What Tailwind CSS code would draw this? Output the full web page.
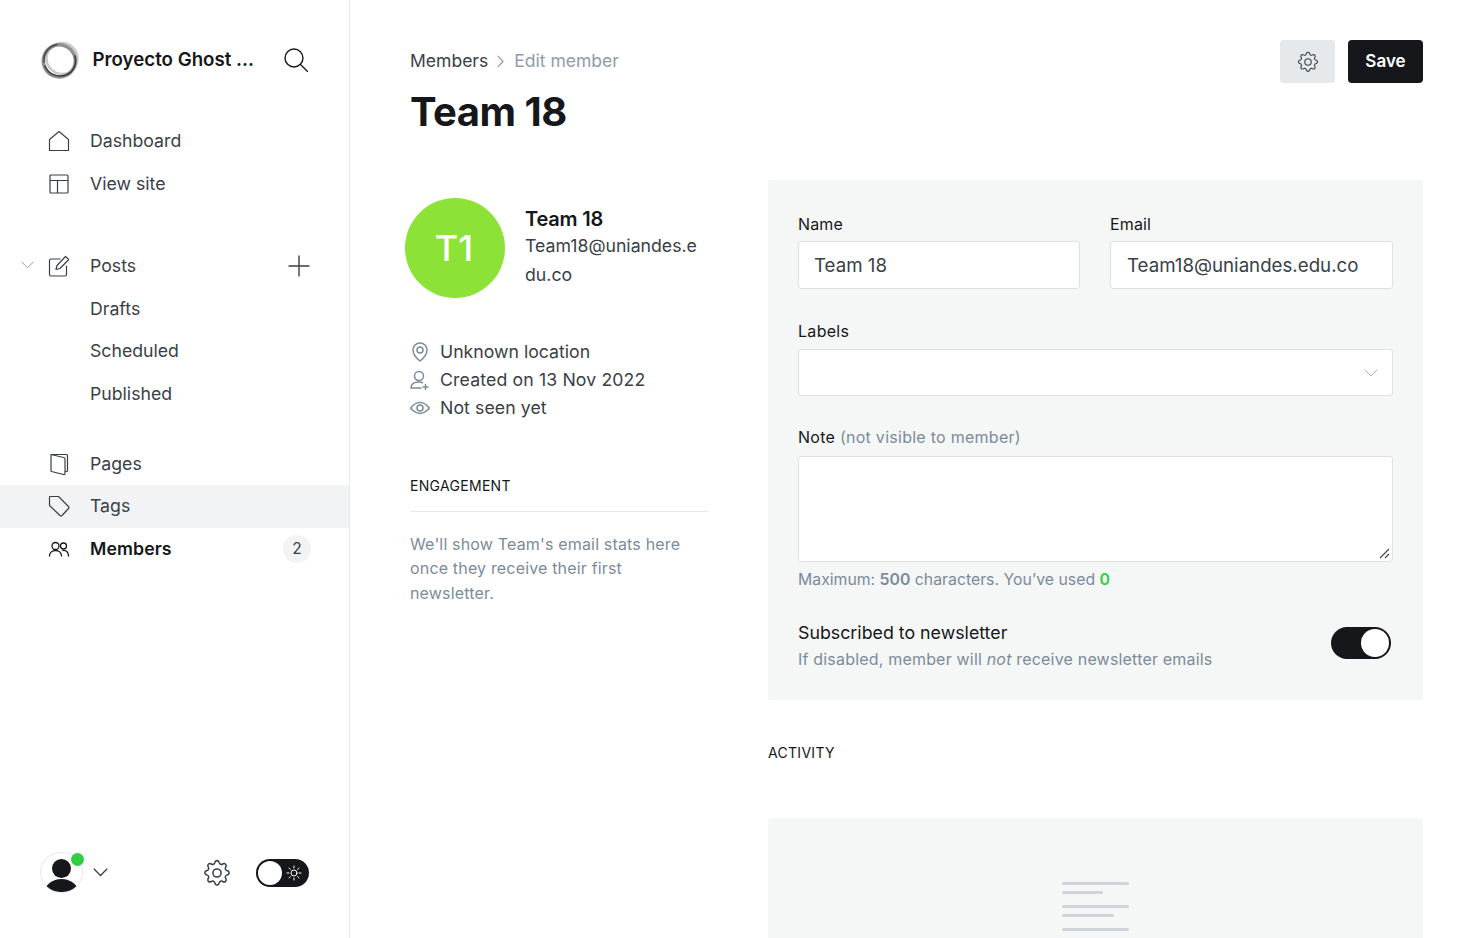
<!doctype html>
<html lang="en">
<head>
<meta charset="utf-8">
<title>Edit member</title>
<script src="https://cdn.jsdelivr.net/npm/@tailwindcss/browser@4"></script>
</head>
<body class="font-['Inter',sans-serif] text-[#15171a] bg-white">
<div class="flex h-[938px] w-[1483px] overflow-hidden">

  <!-- sidebar -->
  <aside class="flex flex-col w-[350px] h-full shrink-0 border-r border-[#e6e9eb]">
    <div class="flex items-center h-[40px] mt-[40px] pl-[40px] pr-[40px]">
      <svg class="w-[40px] h-[40px] shrink-0" viewBox="0 0 40 40" fill="none">
        <ellipse cx="22" cy="18.500" rx="15.500" ry="15.500" stroke="#c9c9c9" stroke-width="2.500"/>
        <ellipse cx="19" cy="20.500" rx="16" ry="16" stroke="#8f8f8f" stroke-width="3.500" transform="rotate(-25 20 20)"/>
        <path d="M5 26C8 34 17 38 26 35 34 32 37 24 35 16" stroke="#3c3c3c" stroke-width="1.500" stroke-linecap="round"/>
        <path d="M4 22C3 13 9 6 17 4.500" stroke="#4a4a4a" stroke-width="1.500" stroke-linecap="round"/>
      </svg>
      <span class="ml-[12.500px] text-[18.700px] font-semibold whitespace-nowrap">Proyecto Ghost ...</span>
      <svg class="w-[24px] h-[24px] ml-auto mr-[1px] shrink-0" viewBox="0 0 24 24" fill="none" stroke="#15171a" stroke-width="1.400" stroke-linecap="round"><circle cx="10" cy="10" r="9"/><path d="M16.500 16.500 23.500 23.500"/></svg>
    </div>

    <nav class="mt-[39px] text-[17.700px] text-[#394047]">
      <a class="flex items-center h-[43px] pl-[48px]">
        <svg class="w-[22px] h-[22px]" viewBox="0 0 22 22" fill="none" stroke="#394047" stroke-width="1.200" stroke-linejoin="round"><path d="M1.500 20.500V9.500L11 1.500l9.500 8v11z"/></svg>
        <span class="ml-[20px] pt-[2px]">Dashboard</span>
      </a>
      <a class="flex items-center h-[43px] pl-[48px]">
        <svg class="w-[22px] h-[22px]" viewBox="0 0 22 22" fill="none" stroke="#394047" stroke-width="1.200"><rect x="2" y="2" width="18" height="18" rx="1"/><path d="M2 7.500h18M9.500 7.500V20"/></svg>
        <span class="ml-[20px] pt-[2px]">View site</span>
      </a>

      <div class="mt-[39px] relative flex items-center h-[43px] pl-[48px]">
        <svg class="absolute left-[21px] top-[17px] w-[13px] h-[8px]" viewBox="0 0 13 8" fill="none" stroke="#8e9cac" stroke-width="1"><path d="M.5.8l6 6 6-6"/></svg>
        <svg class="w-[22px] h-[22px]" viewBox="0 0 22 22" fill="none" stroke="#394047" stroke-width="1.200" stroke-linejoin="round" stroke-linecap="round"><path d="M12 4H3a1.500 1.500 0 0 0-1.500 1.500v14A1.500 1.500 0 0 0 3 21h14a1.500 1.500 0 0 0 1.500-1.500V11"/><path d="M17.500 1.500l3.200 3L12 13.500l-4 1 1-4z"/></svg>
        <span class="ml-[20px] pt-[2px]">Posts</span>
        <svg class="ml-auto mr-[39px] w-[22px] h-[22px]" viewBox="0 0 22 22" fill="none" stroke="#394047" stroke-width="1.400" stroke-linecap="round"><path d="M11 1v20M1 11h20"/></svg>
      </div>
      <a class="flex items-center h-[42.500px] pl-[90px] pt-[2px]">Drafts</a>
      <a class="flex items-center h-[42.500px] pl-[90px] pt-[2px]">Scheduled</a>
      <a class="flex items-center h-[42.500px] pl-[90px] pt-[2px]">Published</a>

      <a class="mt-[29px] flex items-center h-[41.500px] pl-[48px]">
        <svg class="w-[22px] h-[22px]" viewBox="0 0 22 22" fill="none" stroke="#394047" stroke-width="1.200" stroke-linejoin="round"><path d="M3 1.500h15.500a1 1 0 0 1 1 1v15a1 1 0 0 1-1 1H17M3 1.500l12.500 3a1.500 1.500 0 0 1 1.500 1.500v14.500a1 1 0 0 1-1.300 1L3.500 18.500a1 1 0 0 1-.5-1z"/></svg>
        <span class="ml-[20px]">Pages</span>
      </a>
      <a class="flex items-center h-[43px] pl-[48px] pb-[1px] bg-[#f1f3f4]">
        <svg class="w-[22px] h-[22px]" viewBox="0 0 22 22" fill="none" stroke="#394047" stroke-width="1.200" stroke-linejoin="round"><path d="M2 1.500h8.500l10 10a1.500 1.500 0 0 1 0 2L14 20.500a1.500 1.500 0 0 1-2 0L1.500 10.500V2a.5.5 0 0 1 .5-.5z"/></svg>
        <span class="ml-[20px]">Tags</span>
      </a>
      <a class="flex items-center h-[42.500px] pl-[48px] pb-[1px] text-[#15171a]">
        <svg class="w-[22px] h-[22px]" viewBox="0 0 22 22" fill="none" stroke="#15171a" stroke-width="1.300" stroke-linecap="round"><circle cx="7.500" cy="8" r="3.500"/><path d="M1.500 18c0-3.500 2.700-5.500 6-5.500s6 2 6 5.500"/><circle cx="15.500" cy="8" r="3"/><path d="M15 12.500c3.500-.3 5.500 2 5.500 5.500"/></svg>
        <span class="ml-[20px] pt-[2px] font-semibold tracking-[0.100px]">Members</span>
        <span class="ml-auto mr-[38px] flex items-center justify-center w-[28px] h-[28px] rounded-full bg-[#f1f3f4] text-[15.500px] text-[#394047]">2</span>
      </a>
    </nav>

    <div class="mt-auto mb-[45px] flex items-center pl-[40px] pr-[40px]">
      <div class="relative w-[43px] h-[41px] rounded-full border border-[#e6e9eb]">
        <div class="w-full h-full rounded-full overflow-hidden flex flex-col items-center">
          <div class="mt-[6px] w-[19px] h-[19px] shrink-0 rounded-full bg-[#15171a]"></div>
          <div class="mt-[1px] w-[33px] h-[26px] shrink-0 rounded-[50%] bg-[#15171a]"></div>
        </div>
        <span class="absolute top-[0px] right-[-2px] w-[13px] h-[13px] rounded-full bg-[#30cf43]"></span>
      </div>
      <svg class="ml-[10px] w-[15px] h-[9px]" viewBox="0 0 15 9" fill="none" stroke="#394047" stroke-width="1.300"><path d="M.8.8l6.700 6.700L14.200.8"/></svg>
      <svg class="ml-auto w-[28px] h-[28px]" viewBox="0 0 24 24" fill="none" stroke="#394047" stroke-width="1.300" stroke-linejoin="round"><circle cx="12" cy="12" r="3.500"/><path d="M10.300 2.600a1.800 1.800 0 0 1 3.400 0l.3.900a1.800 1.800 0 0 0 2.500 1l.8-.4a1.800 1.800 0 0 1 2.400 2.400l-.4.800a1.800 1.800 0 0 0 1 2.500l.9.300a1.800 1.800 0 0 1 0 3.400l-.9.300a1.800 1.800 0 0 0-1 2.500l.4.800a1.800 1.800 0 0 1-2.400 2.400l-.8-.4a1.800 1.800 0 0 0-2.500 1l-.3.900a1.800 1.800 0 0 1-3.400 0l-.3-.9a1.800 1.800 0 0 0-2.500-1l-.8.4a1.800 1.800 0 0 1-2.400-2.400l.4-.8a1.800 1.800 0 0 0-1-2.500l-.9-.3a1.800 1.800 0 0 1 0-3.400l.9-.3a1.800 1.800 0 0 0 1-2.500l-.4-.8a1.800 1.800 0 0 1 2.400-2.400l.8.400a1.800 1.800 0 0 0 2.500-1z"/></svg>
      <div class="ml-[25px] flex items-center w-[53px] h-[28px] rounded-full bg-[#15171a] pl-[2px]">
        <span class="w-[24px] h-[24px] rounded-full bg-white"></span>
        <svg class="ml-[4px] w-[16px] h-[16px]" viewBox="0 0 16 16" fill="none" stroke="#fff" stroke-width="1" stroke-linecap="round"><circle cx="8" cy="8" r="3"/><path d="M8 1v2M8 13v2M1 8h2M13 8h2M3 3l1.400 1.400M11.600 11.600 13 13M3 13l1.400-1.400M11.600 4.400 13 3"/></svg>
      </div>
    </div>
  </aside>

  <!-- main -->
  <main class="flex-1 min-w-0 h-full overflow-hidden pt-[40px] px-[60px]">
    <header class="flex items-start justify-between h-[140px]">
      <div>
        <div class="flex items-center h-[42px] pt-[1px] text-[17.550px]">
          <span class="text-[#394047]">Members</span>
          <svg class="ml-[9px] mr-[10px] w-[7px] h-[13px]" viewBox="0 0 7 13" fill="none" stroke="#8e9cac" stroke-width="1.200"><path d="M.8.800 6 6.500.8 12.200"/></svg>
          <span class="text-[#8e9cac]">Edit member</span>
        </div>
        <h1 class="mt-[5px] text-[40px] leading-[50px] font-bold tracking-[-0.500px]">Team 18</h1>
      </div>
      <div class="flex gap-[13px]">
        <button class="flex items-center justify-center w-[55px] h-[43px] rounded-[4px] bg-[#e6e9eb]">
          <svg class="w-[22px] h-[22px]" viewBox="0 0 24 24" fill="none" stroke="#394047" stroke-width="1.200" stroke-linejoin="round"><circle cx="12" cy="12" r="3.500"/><path d="M10.300 2.600a1.800 1.800 0 0 1 3.400 0l.3.900a1.800 1.800 0 0 0 2.500 1l.8-.4a1.800 1.800 0 0 1 2.400 2.400l-.4.800a1.800 1.800 0 0 0 1 2.500l.9.300a1.800 1.800 0 0 1 0 3.400l-.9.300a1.800 1.800 0 0 0-1 2.500l.4.800a1.800 1.800 0 0 1-2.400 2.400l-.8-.4a1.800 1.800 0 0 0-2.500 1l-.3.900a1.800 1.800 0 0 1-3.400 0l-.3-.9a1.800 1.800 0 0 0-2.500-1l-.8.4a1.800 1.800 0 0 1-2.400-2.400l.4-.8a1.800 1.800 0 0 0-1-2.500l-.9-.3a1.800 1.800 0 0 1 0-3.400l.9-.3a1.800 1.800 0 0 0 1-2.500l-.4-.8a1.800 1.800 0 0 1 2.400-2.400l.8.400a1.800 1.800 0 0 0 2.500-1z"/></svg>
        </button>
        <button class="w-[75px] h-[43px] rounded-[4px] bg-[#15171a] text-white text-[17px] font-semibold">Save</button>
      </div>
    </header>

    <div class="flex">
      <!-- member details -->
      <section class="w-[298px] shrink-0 pt-[18px]">
        <div class="flex -ml-[5px]">
          <div class="flex items-center justify-center w-[100px] h-[100px] pr-[2px] rounded-full bg-[#8ce237] text-white text-[36px] font-medium">T1</div>
          <div class="ml-[20px] pt-[8px] w-[178px]">
            <h3 class="text-[20px] leading-[26px] font-semibold tracking-[-0.200px]">Team 18</h3>
            <p class="text-[17.700px] leading-[28.500px] text-[#394047] break-all">Team18@uniandes.edu.co</p>
          </div>
        </div>
        <ul class="mt-[40px] text-[17.700px] leading-[28px] text-[#394047]">
          <li class="flex items-center">
            <svg class="w-[20px] h-[20px]" viewBox="0 0 20 20" fill="none" stroke="#7c8b9a" stroke-width="1.500"><path d="M10 19s-7-5.500-7-11a7 7 0 0 1 14 0c0 5.500-7 11-7 11z"/><circle cx="10" cy="8" r="3"/></svg>
            <span class="ml-[10px]">Unknown location</span>
          </li>
          <li class="flex items-center">
            <svg class="w-[20px] h-[20px]" viewBox="0 0 20 20" fill="none" stroke="#7c8b9a" stroke-width="1.500" stroke-linecap="round"><circle cx="9" cy="6" r="4.500"/><path d="M1 18c0-4 3-6 8-6 1.500 0 2.500.2 3.500.6M1 18h10M15.500 14.500v5M13 17h5"/></svg>
            <span class="ml-[10px] tracking-[0.130px]">Created on 13 Nov 2022</span>
          </li>
          <li class="flex items-center">
            <svg class="w-[20px] h-[20px]" viewBox="0 0 20 20" fill="none" stroke="#7c8b9a" stroke-width="1.500"><path d="M.8 10s3.500-5.500 9.200-5.500S19.200 10 19.200 10 15.700 15.500 10 15.500.8 10 .8 10z"/><circle cx="10" cy="10" r="3"/></svg>
            <span class="ml-[10px] tracking-[0.080px]">Not seen yet</span>
          </li>
        </ul>
        <h4 class="mt-[54px] pb-[15px] border-b border-[#e6e9eb] text-[14px] leading-[20px] tracking-[0.300px] text-[#15171a]">ENGAGEMENT</h4>
        <p class="mt-[19.750px] text-[16px] leading-[24.500px] tracking-[0.170px] text-[#7c8b9a]">We'll show Team's email stats here once they receive their first newsletter.</p>
      </section>

      <!-- form -->
      <section class="ml-[60px] flex-1 min-w-0">
        <div class="h-[520px] rounded-[3px] bg-[#f5f6f6] p-[30px] text-[16px]">
          <div class="grid grid-cols-[282px_283px] gap-[30px]">
            <div>
              <label class="block leading-[29px] mb-[2px] tracking-[0.150px]">Name</label>
              <div class="flex items-center h-[48px] pt-[2px] px-[15px] bg-white border border-[#dde1e5] rounded-[3px] text-[18.700px] text-[#394047]">Team 18</div>
            </div>
            <div>
              <label class="block leading-[29px] mb-[2px] tracking-[0.150px]">Email</label>
              <div class="flex items-center h-[48px] pt-[2px] px-[16px] bg-white border border-[#dde1e5] rounded-[3px] text-[18.700px] text-[#394047]">Team18@uniandes.edu.co</div>
            </div>
          </div>
          <label class="block mt-[32px] leading-[20px] mb-[8px] tracking-[0.300px]">Labels</label>
          <div class="flex items-center justify-end h-[47px] pr-[14px] bg-white border border-[#dde1e5] rounded-[3px]">
            <svg class="w-[14px] h-[8px]" viewBox="0 0 14 8" fill="none" stroke="#abb4be" stroke-width="1"><path d="M.5.5l6.500 6.500L13.500.5"/></svg>
          </div>
          <label class="block mt-[31px] leading-[20px] mb-[9px] tracking-[0.270px]">Note <span class="text-[#7c8b9a]">(not visible to member)</span></label>
          <div class="relative h-[106px] bg-white border border-[#dde1e5] rounded-[3px]">
            <svg class="absolute right-[2px] bottom-[2px] w-[11px] h-[11px]" viewBox="0 0 11 11" fill="none" stroke="#444" stroke-width="1.100"><path d="M1 10l9-9M6 10l4-4"/></svg>
          </div>
          <p class="mt-[8px] text-[15.800px] leading-[20px] text-[#7c8b9a]">Maximum: <b class="font-semibold">500</b> characters. You’ve used <b class="font-semibold text-[#30cf43]">0</b></p>
          <div class="mt-[30px] flex items-start justify-between">
            <div>
              <p class="text-[17.800px] leading-[26px]">Subscribed to newsletter</p>
              <p class="leading-[26px] tracking-[0.190px] text-[#7c8b9a]">If disabled, member will <i>not</i> receive newsletter emails</p>
            </div>
            <div class="flex items-center justify-end w-[60px] h-[32px] mt-[7px] mr-[2px] rounded-full bg-[#15171a] pr-[2px]">
              <span class="w-[28px] h-[28px] rounded-full bg-white"></span>
            </div>
          </div>
        </div>
        <h4 class="mt-[43px] text-[14px] leading-[20px] tracking-[0.300px]">ACTIVITY</h4>
        <div class="mt-[55px] h-[300px] rounded-[3px] bg-[#f5f6f6] flex flex-col items-center pt-[64px]">
          <div class="w-[67px] flex flex-col">
            <span class="w-[67px] h-[3px] bg-[#ced4d9] rounded-full"></span>
            <span class="mt-[6px] w-[41px] h-[3px] bg-[#ced4d9] rounded-full"></span>
            <span class="mt-[11px] w-[67px] h-[3px] bg-[#ced4d9] rounded-full"></span>
            <span class="mt-[6px] w-[52px] h-[3px] bg-[#ced4d9] rounded-full"></span>
            <span class="mt-[11px] w-[67px] h-[3px] bg-[#ced4d9] rounded-full"></span>
          </div>
        </div>
      </section>
    </div>
  </main>
</div>
</body>
</html>
